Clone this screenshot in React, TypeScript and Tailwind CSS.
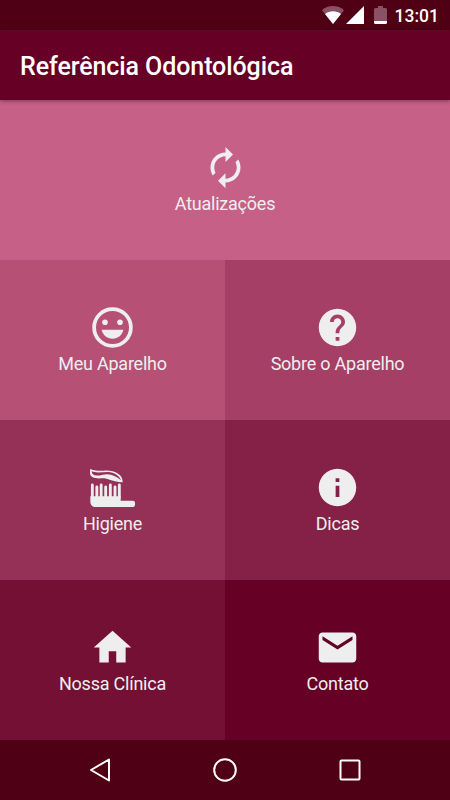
import React from 'react';

type Tile = {
    label: string;
    bg: string;
    icon: React.ReactNode;
};

const RefreshIcon = () => (
    <path d="M12 6v3l4-4-4-4v3c-4.42 0-8 3.58-8 8 0 1.57.46 3.03 1.24 4.26L6.7 14.8c-.45-.83-.7-1.79-.7-2.8 0-3.31 2.69-6 6-6zm6.76 1.74L17.3 9.2c.44.84.7 1.79.7 2.8 0 3.31-2.69 6-6 6v-3l-4 4 4 4v-3c4.42 0 8-3.58 8-8 0-1.57-.46-3.03-1.24-4.26z" />
);

const SmileIcon = () => (
    <>
        <circle cx="12" cy="12" r="9.8" fill="none" stroke="currentColor" strokeWidth="2" />
        <circle cx="8" cy="9.2" r="1.5" />
        <circle cx="16" cy="9.2" r="1.5" />
        <path d="M6.2 13.2h11.6c-.6 2.8-2.9 4.8-5.8 4.8s-5.2-2-5.8-4.8z" />
    </>
);

const HelpIcon = () => (
    <path d="M12 2C6.48 2 2 6.48 2 12s4.48 10 10 10 10-4.48 10-10S17.52 2 12 2zm1 17h-2v-2h2v2zm2.07-7.75l-.9.92C13.45 12.9 13 13.5 13 15h-2v-.5c0-1.1.45-2.1 1.17-2.83l1.24-1.26c.37-.36.59-.86.59-1.41 0-1.1-.9-2-2-2s-2 .9-2 2H8c0-2.21 1.79-4 4-4s4 1.79 4 4c0 .88-.36 1.68-.93 2.25z" />
);

const BrushIcon = () => (
    <g transform="scale(0.17778)">
        {/* paste */}
        <path
            fillRule="evenodd"
            d="M2 11C9 17 24 17 42 17C74 15 99 29 98 52C82 52 68 47 52 42C38 38 28 42 16 39C4 37 0 31 0 24C0 18 0 14 2 11zM5 19C6 33 20 34 38 29C60 24 76 31 93 46C88 32 73 22 54 21C36 21 18 25 5 19z"
        />
        {/* bristles */}
        <path
            d="M7 60v36M20.500 66v34M33.500 60v38M47 66v34M61 60v38M75 66v34M88 60v38"
            fill="none"
            stroke="currentColor"
            strokeWidth="8.5"
            strokeLinecap="round"
        />
        <path d="M1 94h91v13h37a6 6 0 0 1 6 6v7a6 6 0 0 1-6 6H17C7 126 1 119 1 110z" />
    </g>
);

const InfoIcon = () => (
    <path d="M12 2C6.48 2 2 6.48 2 12s4.48 10 10 10 10-4.48 10-10S17.52 2 12 2zm1 15h-2v-6h2v6zm0-8h-2V7h2v2z" />
);

const HomeIcon = () => <path d="M10 20v-6h4v6h5v-8h3L12 3 2 12h3v8z" />;

const MailIcon = () => (
    <path d="M20 4H4c-1.1 0-1.99.9-1.99 2L2 18c0 1.1.9 2 2 2h16c1.1 0 2-.9 2-2V6c0-1.1-.9-2-2-2zm0 4l-8 5-8-5V6l8 5 8-5v2z" />
);

const tiles: Tile[] = [
    { label: 'Atualizações', bg: 'col-span-2 bg-[#c66086]', icon: <RefreshIcon /> },
    { label: 'Meu Aparelho', bg: 'bg-[#b65075]', icon: <SmileIcon /> },
    { label: 'Sobre o Aparelho', bg: 'bg-[#a53f65]', icon: <HelpIcon /> },
    { label: 'Higiene', bg: 'bg-[#953056]', icon: <BrushIcon /> },
    { label: 'Dicas', bg: 'bg-[#852046]', icon: <InfoIcon /> },
    { label: 'Nossa Clínica', bg: 'bg-[#751035]', icon: <HomeIcon /> },
    { label: 'Contato', bg: 'bg-[#660025]', icon: <MailIcon /> },
];

const StatusBar = () => (
    <div className="flex h-[30px] items-center justify-end bg-[#4f0014] pr-[11px] text-white">
        <svg width="22" height="18" viewBox="0 0 22 18" className="mr-[2px]">
            <path d="M0 4.2C6 -1.4 16 -1.4 22 4.2L11 18z" fill="#8a5064" />
            <path d="M3 8C7.500 4.200 14.500 4.200 19 8L11 18z" fill="#fff" />
        </svg>
        <svg width="18" height="18" viewBox="0 0 18 18" className="mr-[10px]">
            <path d="M18 0v18H0z" fill="#fff" />
        </svg>
        <svg width="13" height="18" viewBox="0 0 13 18" className="mr-[8px]">
            <path d="M4 0h5v2h2.500q1.500 0 1.500 1.500V15H0V3.500Q0 2 1.500 2H4z" fill="#8a5064" />
            <path d="M0 15h13v1.500q0 1.500-1.500 1.500h-10Q0 18 0 16.500z" fill="#fff" />
        </svg>
        <span className="pt-[3px] text-[17.5px] font-medium leading-none">13:01</span>
    </div>
);

const NavBar = () => (
    <div className="flex h-[60px] items-center justify-between bg-[#4f0014] px-[88px]">
        <svg width="24" height="26" viewBox="0 0 24 26" fill="none" stroke="#fff" strokeWidth="2" strokeLinejoin="round">
            <path d="M21 2.500v21L3 13z" />
        </svg>
        <svg width="24" height="26" viewBox="0 0 24 26" fill="none" stroke="#fff" strokeWidth="2">
            <circle cx="12" cy="13" r="10.800" />
        </svg>
        <svg width="24" height="26" viewBox="0 0 24 26" fill="none" stroke="#fff" strokeWidth="2">
            <rect x="2.500" y="3.500" width="19" height="19" rx="1" />
        </svg>
    </div>
);

const App: React.FC = () => {
    return (
        <div className="flex h-[800px] w-[450px] flex-col overflow-hidden font-[Roboto,sans-serif]">
            <StatusBar />
            <header className="z-10 flex h-[70px] items-center bg-[#660025] pl-5 pt-[4px] shadow-[0_1px_4px_rgba(0,0,0,0.4)]">
                <h1 className="text-[25px] font-medium tracking-[-0.09px] text-white">Referência Odontológica</h1>
            </header>
            <main className="grid grid-cols-2">
                {tiles.map(tile => (
                    <button
                        key={tile.label}
                        className={`flex h-40 flex-col items-center pt-[45px] text-[#eeeeee] ${tile.bg}`}
                    >
                        <svg width="45" height="45" viewBox="0 0 24 24" fill="currentColor">
                            {tile.icon}
                        </svg>
                        <span className="text-[18px] leading-[28px] tracking-[-0.23px]">{tile.label}</span>
                    </button>
                ))}
            </main>
            <NavBar />
        </div>
    );
};

export default App;
